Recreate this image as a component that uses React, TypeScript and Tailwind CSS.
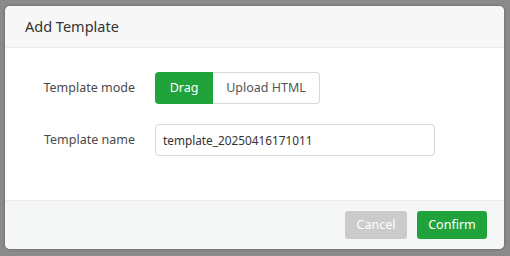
export default function App() {
  return (
    <div
      className="h-[256px] w-[510px] bg-[#8b8b8b] pl-[5px] pt-[6px]"
      style={{ fontFamily: '"Noto Sans", "Open Sans", sans-serif' }}
    >
      <div className="flex h-[243px] w-[499px] flex-col overflow-hidden rounded-[5px] bg-white shadow-[0_0_3px_rgba(0,0,0,0.35)]">
        <div className="flex h-[42px] items-center border-b border-[#ebebeb] bg-[#f7f7f7] px-[20px]">
          <h2 className="text-[14.5px] text-[#333]">Add Template</h2>
        </div>

        <div className="flex flex-1 flex-col gap-[20px] pt-[24px]">
          <div className="flex items-center">
            <label className="w-[130px] text-right text-[12.5px] text-[#4a4a4a]">
              Template mode
            </label>
            <div className="ml-[20px] flex h-[32px] text-[12.5px]">
              <button className="w-[58px] rounded-l-[4px] bg-[#21a33c] text-white">
                Drag
              </button>
              <button className="w-[107px] rounded-r-[4px] border border-l-0 border-[#d9d9d9] text-[#555]">
                Upload HTML
              </button>
            </div>
          </div>

          <div className="flex items-center">
            <label className="w-[130px] text-right text-[12.5px] text-[#4a4a4a]">
              Template name
            </label>
            <input
              readOnly
              value="template_20250416171011"
              className="ml-[20px] h-[32px] w-[280px] rounded-[4px] border border-[#d9d9d9] px-[7px] text-[11.8px] text-[#333] outline-none"
            />
          </div>
        </div>

        <div className="flex h-[49px] items-start justify-end gap-[10px] border-t border-[#ebebeb] bg-[#f5f7f7] pr-[17px] pt-[10px]">
          <button className="h-[28px] w-[62px] rounded-[3px] bg-[#cbcbcb] text-[12.5px] text-white">
            Cancel
          </button>
          <button className="h-[28px] w-[70px] rounded-[3px] bg-[#21a33c] text-[12.5px] text-white">
            Confirm
          </button>
        </div>
      </div>
    </div>
  );
}
